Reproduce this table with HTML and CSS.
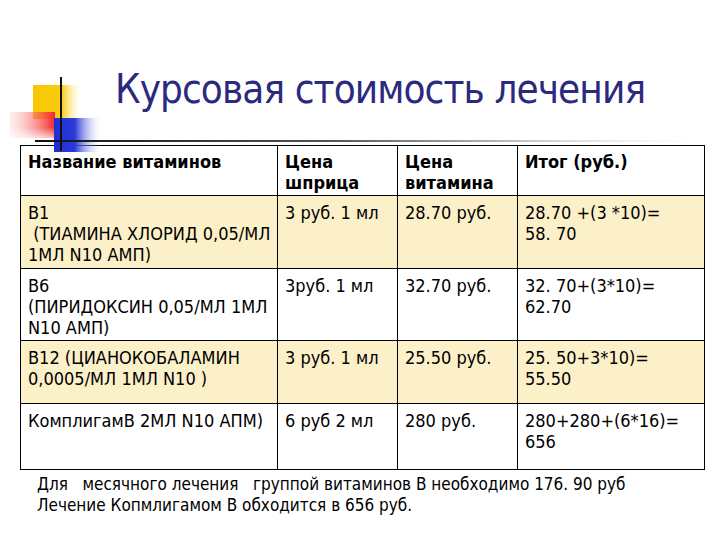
FILE: index.html
```html
<!DOCTYPE html>
<html lang="ru">
<head>
<meta charset="utf-8">
<title>Курсовая стоимость лечения</title>
<link rel="stylesheet" href="styles.css">
</head>
<body>
<div class="slide">
  <header class="head">
    <svg class="deco" width="720" height="160" viewBox="0 0 720 160" aria-hidden="true">
      <defs>
        <linearGradient id="gy" x1="0" y1="0" x2="1" y2="0">
          <stop offset="0" stop-color="#f7c700"/>
          <stop offset="0.6" stop-color="#f9cc10"/>
          <stop offset="1" stop-color="#fff4c0" stop-opacity="0"/>
        </linearGradient>
        <linearGradient id="gr" x1="0" y1="0" x2="1" y2="0">
          <stop offset="0" stop-color="#ffb0b0" stop-opacity="0.2"/>
          <stop offset="1" stop-color="#f02828"/>
        </linearGradient>
        <linearGradient id="grv" x1="0" y1="0" x2="0" y2="1">
          <stop offset="0" stop-color="#fff" stop-opacity="0"/>
          <stop offset="0.6" stop-color="#fff" stop-opacity="0"/>
          <stop offset="1" stop-color="#fff" stop-opacity="0.7"/>
        </linearGradient>
        <linearGradient id="gb" x1="0" y1="0" x2="1" y2="0">
          <stop offset="0" stop-color="#1f2fd6"/>
          <stop offset="0.45" stop-color="#2a3ad8"/>
          <stop offset="1" stop-color="#c8ccf4" stop-opacity="0"/>
        </linearGradient>
        <linearGradient id="gl" x1="0" y1="0" x2="1" y2="0">
          <stop offset="0" stop-color="#111"/>
          <stop offset="0.45" stop-color="#555"/>
          <stop offset="0.75" stop-color="#c8c8c8"/>
          <stop offset="1" stop-color="#e8e8e8" stop-opacity="0"/>
        </linearGradient>
      </defs>
      <rect x="33" y="85" width="48" height="34" fill="url(#gy)"/>
      <rect x="10" y="112" width="45" height="26" fill="url(#gr)"/>
      <rect x="10" y="112" width="45" height="26" fill="url(#grv)"/>
      <rect x="54" y="118" width="46" height="34" fill="url(#gb)"/>
      <rect x="35" y="140" width="660" height="2" fill="url(#gl)"/>
      <rect x="60" y="77" width="2" height="74" fill="#111"/>
    </svg>
    <h1 class="title">Курсовая стоимость лечения</h1>
  </header>

  <table class="grid">
    <colgroup>
      <col class="c1"><col class="c2"><col class="c3"><col class="c4">
    </colgroup>
    <tr class="row-head">
      <th>Название витаминов</th>
      <th>Цена<br>шприца</th>
      <th>Цена<br>витамина</th>
      <th>Итог (руб.)</th>
    </tr>
    <tr class="row-b1 tint">
      <td>B1<br>&nbsp;(ТИАМИНА ХЛОРИД 0,05/МЛ<br>1МЛ N10 АМП)</td>
      <td>3 руб. 1 мл</td>
      <td>28.70 руб.</td>
      <td>28.70 +(3 *10)=<br>58. 70</td>
    </tr>
    <tr class="row-b6">
      <td>B6<br>(ПИРИДОКСИН 0,05/МЛ 1МЛ<br>N10 АМП)</td>
      <td>3руб. 1 мл</td>
      <td>32.70 руб.</td>
      <td>32. 70+(3*10)=<br>62.70</td>
    </tr>
    <tr class="row-b12 tint">
      <td>B12 (ЦИАНОКОБАЛАМИН<br>0,0005/МЛ 1МЛ N10 )</td>
      <td>3 руб. 1 мл</td>
      <td>25.50 руб.</td>
      <td>25. 50+3*10)=<br>55.50</td>
    </tr>
    <tr class="row-k">
      <td>КомплигамB 2МЛ N10 АПМ)</td>
      <td>6 руб 2 мл</td>
      <td>280 руб.</td>
      <td>280+280+(6*16)=<br>656</td>
    </tr>
  </table>

  <p class="note">Для   месячного лечения   группой витаминов В необходимо 176. 90 руб
Лечение Копмлигамом В обходится в 656 руб.</p>
</div>
</body>
</html>
```
FILE: styles.css
```css
html, body {
  margin: 0;
  padding: 0;
  background: #ffffff;
}

body {
  width: 720px;
  height: 540px;
  overflow: hidden;
  font-family: "DejaVu Sans Condensed", "DejaVu Sans", "Liberation Sans", sans-serif;
  color: #000;
}

.slide {
  width: 720px;
  height: 540px;
}

.head {
  position: relative;
  height: 145px;
  box-sizing: border-box;
  padding-top: 65px;
}

.deco {
  position: absolute;
  left: 0;
  top: 0;
  z-index: 2;
  pointer-events: none;
}

.title {
  margin: 0;
  padding-left: 115px;
  font-weight: normal;
  font-size: 40px;
  letter-spacing: -0.9px;
  line-height: 48px;
  color: #2b2a7e;
  white-space: nowrap;
}

.grid {
  margin-left: 20px;
  width: 684px;
  border-collapse: collapse;
  table-layout: fixed;
  font-size: 18px;
  line-height: 21px;
}

.c1 { width: 257px; }
.c2 { width: 120px; }
.c3 { width: 120px; }
.c4 { width: 187px; }

.grid th,
.grid td {
  border: 1px solid #000;
  vertical-align: top;
  text-align: left;
  padding: 5px 7px 0 7px;
  white-space: nowrap;
}

.grid th {
  font-weight: bold;
}

.tint td {
  background: #fcf0c9;
}

.row-head { height: 50px; }
.row-b1 { height: 73px; }
.row-b6 { height: 72px; }
.row-b12 { height: 63px; }
.row-k { height: 66px; }

.row-b1 td, .row-b6 td, .row-b12 td, .row-k td {
  padding-top: 6px;
}

.note {
  margin: 4px 0 0 37px;
  font-size: 17px;
  line-height: 21px;
  white-space: pre;
}
```
